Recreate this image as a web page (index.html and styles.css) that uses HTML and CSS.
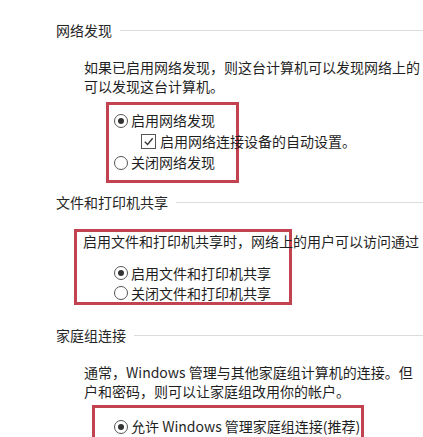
FILE: index.html
```html
<!DOCTYPE html>
<html lang="zh-CN">
<head>
<meta charset="utf-8">
<link rel="stylesheet" href="styles.css">
</head>
<body>
<div class="page">
  <div class="heading h1"><span>网络发现</span><span class="rule"></span></div>
  <div class="para p1">
    <div class="line">如果已启用网络发现，则这台计算机可以发现网络上的</div>
    <div class="line">可以发现这台计算机。</div>
  </div>
  <div class="box box1">
    <div class="opt"><span class="radio on"></span>启用网络发现</div>
    <div class="opt sub"><span class="check"><svg viewBox="0 0 14 14" width="14" height="14"><path d="M3 7.2 L6 10.2 L11.5 3.5" fill="none" stroke="#333" stroke-width="1.4"/></svg></span>启用网络连接设备的自动设置。</div>
    <div class="opt"><span class="radio"></span>关闭网络发现</div>
  </div>

  <div class="heading h2"><span>文件和打印机共享</span><span class="rule"></span></div>
  <div class="box box2">
    <div class="line">启用文件和打印机共享时，网络上的用户可以访问通过</div>
    <div class="opts2">
      <div class="opt"><span class="radio on"></span>启用文件和打印机共享</div>
      <div class="opt"><span class="radio"></span>关闭文件和打印机共享</div>
    </div>
  </div>

  <div class="heading h3"><span>家庭组连接</span><span class="rule"></span></div>
  <div class="para p3">
    <div class="line">通常，Windows 管理与其他家庭组计算机的连接。但</div>
    <div class="line">户和密码，则可以让家庭组改用你的帐户。</div>
  </div>
  <div class="box box3">
    <div class="opt"><span class="radio on"></span>允许 Windows 管理家庭组连接(推荐)</div>
  </div>
</div>
</body>
</html>
```

FILE: styles.css
```css
html, body {
  margin: 0;
  padding: 0;
  background: #ffffff;
  overflow: hidden;
}
body {
  width: 423px;
  height: 437px;
  font-family: "Noto Sans CJK SC", "Noto Sans", sans-serif;
  font-size: 14px;
  line-height: 19px;
  color: #1f1f1f;
}
.page {
  padding-left: 56px;
  padding-top: 21px;
  height: 437px;
  box-sizing: border-box;
  overflow: hidden;
}
.heading {
  display: flex;
  align-items: center;
  gap: 8px;
  white-space: nowrap;
  color: #262626;
}
.rule {
  flex: 1;
  height: 1px;
  background: #dcdcdc;
}
.line {
  white-space: nowrap;
}
.para {
  margin-left: 28px;
}
.p1 { margin-top: 18px; }
.box {
  border: 3px solid #c2434f;
  box-sizing: border-box;
  white-space: nowrap;
}
.box1 {
  margin-top: 6px;
  margin-left: 50px;
  width: 133px;
  height: 81px;
  padding: 5px 0 0 5px;
}
.opt {
  display: flex;
  align-items: center;
  height: 21px;
}
.radio {
  width: 12px;
  height: 12px;
  border: 1px solid #555;
  border-radius: 50%;
  margin-right: 3px;
  flex: none;
  position: relative;
  background: #fff;
}
.radio.on::after {
  content: "";
  position: absolute;
  left: 3px;
  top: 3px;
  width: 6px;
  height: 6px;
  border-radius: 50%;
  background: #333;
}
.sub {
  padding-left: 27px;
}
.check {
  width: 13px;
  height: 13px;
  border: 1px solid #555;
  margin-right: 4px;
  flex: none;
  display: flex;
}
.check svg {
  width: 13px;
  height: 13px;
}
.h2 { margin-top: 10px; }
.box2 {
  margin-top: 17px;
  margin-left: 18px;
  width: 218px;
  height: 76px;
  padding-left: 6px;
}
.opts2 {
  margin-top: 12px;
  padding-left: 31px;
}
.opts2 .opt { height: 20px; }
.h3 { margin-top: 21px; }
.p3 { margin-top: 18px; }
.box3 {
  margin-top: 4px;
  margin-left: 36px;
  width: 272px;
  height: 40px;
  padding: 8px 0 0 19px;
}
```
